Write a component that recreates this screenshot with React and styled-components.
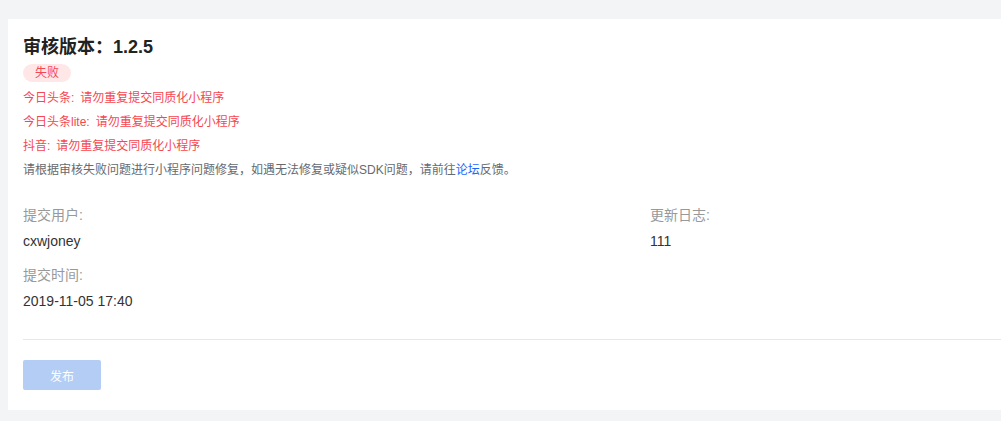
import React from "react";
import styled, { createGlobalStyle } from "styled-components";

const Global = createGlobalStyle`
  html, body {
    margin: 0;
    padding: 0;
    background: #f3f4f6;
    overflow: hidden;
  }
  body {
    font-family: "Liberation Sans", "Noto Sans CJK SC", sans-serif;
  }
  #root {
    padding: 19px 0 11px 8px;
  }
`;

const Card = styled.section`
  background: #ffffff;
  padding: 16px 0 20px 15px;
  box-sizing: border-box;
`;

const Title = styled.h2`
  margin: 0;
  font-size: 18px;
  line-height: 24px;
  font-weight: 700;
  color: #222222;
`;

const Tag = styled.span`
  display: inline-block;
  margin-top: 5px;
  height: 18px;
  line-height: 18px;
  padding: 0 12px;
  border-radius: 9px;
  font-size: 12px;
  color: #f5474f;
  background: #ffe7e8;
`;

const Messages = styled.div`
  margin-top: 4px;
`;

const Line = styled.p`
  margin: 0;
  font-size: 12px;
  line-height: 24px;
  white-space: nowrap;
  color: ${(p) => (p.$error ? "#f5474f" : "#666a70")};
`;

const Source = styled.span`
  margin-right: 6px;
`;

const Link = styled.a`
  color: #1a66ff;
  text-decoration: none;
`;

const InfoGrid = styled.div`
  display: grid;
  grid-template-columns: 627px 1fr;
  row-gap: 12px;
  margin-top: 22px;
`;

const Field = styled.div`
  display: flex;
  flex-direction: column;
  gap: 4px;
`;

const Label = styled.span`
  font-size: 14px;
  line-height: 22px;
  color: #999999;
`;

const Value = styled.span`
  font-size: 14px;
  line-height: 22px;
  color: #333333;
`;

const Divider = styled.hr`
  margin: 27px 0 0;
  border: none;
  border-top: 1px solid #e6e7e9;
`;

const Footer = styled.div`
  display: flex;
  padding-top: 20px;
`;

const Button = styled.button`
  width: 78px;
  height: 30px;
  border: none;
  border-radius: 2px;
  background: #b3cdf4;
  color: #ffffff;
  font-family: inherit;
  font-size: 12px;
  cursor: not-allowed;
  padding: 0;
`;

export default function App() {
  const errors = [
    ["今日头条:", "请勿重复提交同质化小程序"],
    ["今日头条lite:", "请勿重复提交同质化小程序"],
    ["抖音:", "请勿重复提交同质化小程序"],
  ];
  return (
    <>
      <Global />
      <Card>
        <Title>审核版本：1.2.5</Title>
        <Tag>失败</Tag>
        <Messages>
          {errors.map(([src, msg]) => (
            <Line $error key={src}>
              <Source>{src}</Source>
              {msg}
            </Line>
          ))}
          <Line>
            请根据审核失败问题进行小程序问题修复，如遇无法修复或疑似SDK问题，请前往
            <Link href="#">论坛</Link>反馈。
          </Line>
        </Messages>
        <InfoGrid>
          <Field>
            <Label>提交用户:</Label>
            <Value>cxwjoney</Value>
          </Field>
          <Field>
            <Label>更新日志:</Label>
            <Value>111</Value>
          </Field>
          <Field>
            <Label>提交时间:</Label>
            <Value>2019-11-05 17:40</Value>
          </Field>
        </InfoGrid>
        <Divider />
        <Footer>
          <Button disabled>发布</Button>
        </Footer>
      </Card>
    </>
  );
}
